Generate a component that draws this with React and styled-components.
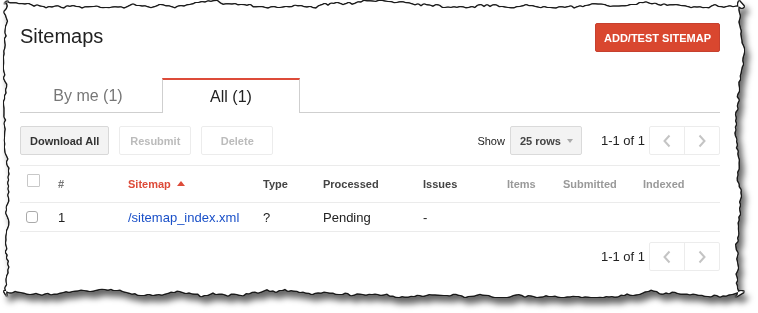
import React from 'react';
import styled, { createGlobalStyle } from 'styled-components';

const GlobalStyle = createGlobalStyle`
  html, body { margin: 0; padding: 0; background: #fff; }
  body { font-family: "Liberation Sans", Arial, sans-serif; }
`;

// torn paper outline, seeded so it is stable
const PAPER_W = 740;
const PAPER_H = 296;

function rng(seed) {
  let s = seed;
  return () => {
    s = (s * 16807) % 2147483647;
    return (s - 1) / 2147483646;
  };
}

function jagged(n, r, max) {
  const out = [];
  let v = max / 2;
  for (let i = 0; i < n; i++) {
    v += (r() - 0.5) * 2.4;
    v = Math.max(0, Math.min(max, v));
    out.push(Math.max(0, Math.min(max + 1, v + (r() - 0.5) * 1.8)));
  }
  return out;
}

function tornPolygon() {
  const r = rng(7);
  const step = 3;
  const pts = [];
  const top = jagged(Math.ceil(PAPER_W / step) + 1, r, 7);
  top.forEach((d, i) => pts.push([Math.min(i * step, PAPER_W), d]));
  const right = jagged(Math.ceil(PAPER_H / step) + 1, r, 9);
  right.forEach((d, i) => pts.push([PAPER_W - d, Math.min(i * step, PAPER_H)]));
  const bottom = jagged(Math.ceil(PAPER_W / step) + 1, r, 8);
  bottom.forEach((d, i) => pts.push([Math.max(PAPER_W - i * step, 0), PAPER_H - d]));
  const left = jagged(Math.ceil(PAPER_H / step) + 1, r, 5);
  left.forEach((d, i) => pts.push([d, Math.max(PAPER_H - i * step, 0)]));
  return `polygon(${pts.map(([x, y]) => `${x.toFixed(1)}px ${y.toFixed(1)}px`).join(', ')})`;
}

const TORN = tornPolygon();

const Stage = styled.div`
  width: 758px;
  height: 313px;
  padding: 1px 0 0 4px;
  box-sizing: border-box;
  filter: drop-shadow(1px 0 0 #1a1a1a) drop-shadow(-1px 0 0 #1a1a1a)
    drop-shadow(0 1px 0 #1a1a1a) drop-shadow(0 -1px 0 #1a1a1a)
    drop-shadow(4px 6px 3px rgba(0, 0, 0, 0.6));
`;

const Paper = styled.div`
  width: ${PAPER_W}px;
  height: ${PAPER_H}px;
  box-sizing: border-box;
  background: #fff;
  clip-path: ${TORN};
  padding: 22px 24px 0 16px;
`;

const Header = styled.div`
  display: flex;
  align-items: center;
  justify-content: space-between;
  height: 29px;
`;

const Title = styled.h1`
  margin: 0;
  font-size: 20px;
  font-weight: normal;
  color: #222;
  line-height: 24px;
  margin-top: -3px;
`;

const RedButton = styled.button`
  height: 29px;
  width: 125px;
  border: 1px solid #c6402f;
  border-radius: 2px;
  background: #d9472f;
  color: #fff;
  font-family: inherit;
  font-size: 11px;
  font-weight: bold;
  text-transform: uppercase;
  padding: 0;
`;

const TabBar = styled.div`
  display: flex;
  margin-top: 26px;
  border-bottom: 1px solid #cfcfcf;
  height: 34px;
`;

const Tab = styled.div`
  box-sizing: border-box;
  width: ${(p) => (p.$active ? 138 : 142)}px;
  height: ${(p) => (p.$active ? 35 : 34)}px;
  display: flex;
  align-items: center;
  justify-content: center;
  font-size: 16px;
  color: ${(p) => (p.$active ? '#222' : '#777')};
  background: #fff;
  border-top: 2px solid ${(p) => (p.$active ? '#dd4b39' : 'transparent')};
  border-left: 1px solid ${(p) => (p.$active ? '#cfcfcf' : 'transparent')};
  border-right: 1px solid ${(p) => (p.$active ? '#cfcfcf' : 'transparent')};
  padding-top: ${(p) => (p.$active ? 1 : 0)}px;
  padding-right: ${(p) => (p.$active ? 0 : 6)}px;
`;

const Toolbar = styled.div`
  display: flex;
  align-items: center;
  gap: 10px;
  margin-top: 13px;
  height: 29px;
`;

const GrayButton = styled.button`
  box-sizing: border-box;
  height: 29px;
  min-width: 72px;
  padding: 0 9px;
  border-radius: 2px;
  font-family: inherit;
  font-size: 11px;
  font-weight: bold;
  border: 1px solid ${(p) => (p.disabled ? '#ececec' : '#d8d8d8')};
  background: ${(p) => (p.disabled ? '#fff' : '#f3f3f3')};
  color: ${(p) => (p.disabled ? '#bbb' : '#333')};
`;

const Spacer = styled.div`
  flex: 1;
`;

const ShowLabel = styled.span`
  font-size: 11px;
  color: #222;
  margin-right: -5px;
`;

const Select = styled.div`
  box-sizing: border-box;
  width: 72px;
  height: 29px;
  display: flex;
  align-items: center;
  gap: 6px;
  padding-left: 9px;
  border: 1px solid #dadada;
  border-radius: 2px;
  background: #f3f3f3;
  font-size: 11px;
  font-weight: bold;
  color: #444;
`;

const Caret = styled.span`
  width: 0;
  height: 0;
  border-left: 3.5px solid transparent;
  border-right: 3.5px solid transparent;
  border-top: 4px solid #aaa;
`;

const Pager = styled.div`
  display: flex;
  align-items: center;
  gap: 4px;
  margin-left: 9px;
  justify-content: flex-end;
  margin-top: ${(p) => p.$top || 0}px;
`;

const PageCount = styled.span`
  font-size: 13px;
  color: #222;
`;

const PageButtons = styled.div`
  display: flex;
  height: 29px;
  border: 1px solid #ececec;
  border-radius: 2px;
  box-sizing: border-box;
`;

const PageBtn = styled.div`
  width: 34px;
  display: flex;
  align-items: center;
  justify-content: center;
  & + & {
    border-left: 1px solid #ececec;
  }
`;

const Grid = styled.div`
  display: grid;
  grid-template-columns: 38px 70px 135px 60px 100px 84px 56px 80px 1fr;
  align-items: center;
  box-sizing: border-box;
  height: ${(p) => p.$h}px;
  border-bottom: 1px solid #ebebeb;
`;

const Table = styled.div`
  margin-top: 10px;
  border-top: 1px solid #ebebeb;
`;

const HeadCell = styled.div`
  font-size: 11px;
  font-weight: bold;
  color: ${(p) => p.$color || '#444'};
  display: flex;
  align-items: center;
  gap: 6px;
`;

const Cell = styled.div`
  font-size: 13px;
  color: ${(p) => p.$color || '#222'};
`;

const Check = styled.span`
  display: block;
  box-sizing: border-box;
  width: ${(p) => (p.$round ? 12 : 13)}px;
  height: ${(p) => (p.$round ? 12 : 13)}px;
  margin-left: ${(p) => (p.$round ? 6 : 7)}px;
  margin-top: ${(p) => (p.$round ? 0 : -8)}px;
  border: 1px solid ${(p) => (p.$round ? '#aaa' : '#c8c8c8')};
  border-radius: ${(p) => (p.$round ? 3 : 1)}px;
  background: #fff;
`;

const SortArrow = styled.span`
  width: 0;
  height: 0;
  border-left: 4.5px solid transparent;
  border-right: 4.5px solid transparent;
  border-bottom: 5px solid #dd4b39;
  margin-top: -2px;
`;

const Chevron = ({ dir }) => (
  <svg width="10" height="14" viewBox="0 0 10 14">
    <polyline
      points={dir === 'left' ? '7.5,1.5 2.5,7 7.5,12.5' : '2.5,1.5 7.5,7 2.5,12.5'}
      fill="none"
      stroke="#c4c4c4"
      strokeWidth="2"
    />
  </svg>
);

const Pagination = ({ top }) => (
  <Pager $top={top}>
    <PageCount>1-1 of 1</PageCount>
    <PageButtons>
      <PageBtn><Chevron dir="left" /></PageBtn>
      <PageBtn><Chevron dir="right" /></PageBtn>
    </PageButtons>
  </Pager>
);

export default function App() {
  return (
    <Stage>
      <GlobalStyle />
      <Paper>
        <Header>
          <Title>Sitemaps</Title>
          <RedButton>Add/Test Sitemap</RedButton>
        </Header>

        <TabBar>
          <Tab>By me (1)</Tab>
          <Tab $active>All (1)</Tab>
        </TabBar>

        <Toolbar>
          <GrayButton>Download All</GrayButton>
          <GrayButton disabled>Resubmit</GrayButton>
          <GrayButton disabled>Delete</GrayButton>
          <Spacer />
          <ShowLabel>Show</ShowLabel>
          <Select>25 rows <Caret /></Select>
          <Pagination />
        </Toolbar>

        <Table>
          <Grid $h={37}>
            <Check />
            <HeadCell $color="#777">#</HeadCell>
            <HeadCell $color="#dd4b39">Sitemap <SortArrow /></HeadCell>
            <HeadCell>Type</HeadCell>
            <HeadCell>Processed</HeadCell>
            <HeadCell>Issues</HeadCell>
            <HeadCell $color="#999">Items</HeadCell>
            <HeadCell $color="#999">Submitted</HeadCell>
            <HeadCell $color="#999">Indexed</HeadCell>
          </Grid>
          <Grid $h={29}>
            <Check $round />
            <Cell>1</Cell>
            <Cell $color="#1a50c8">/sitemap_index.xml</Cell>
            <Cell>?</Cell>
            <Cell>Pending</Cell>
            <Cell>-</Cell>
            <Cell />
            <Cell />
            <Cell />
          </Grid>
        </Table>

        <Pagination top={10} />
      </Paper>
    </Stage>
  );
}
